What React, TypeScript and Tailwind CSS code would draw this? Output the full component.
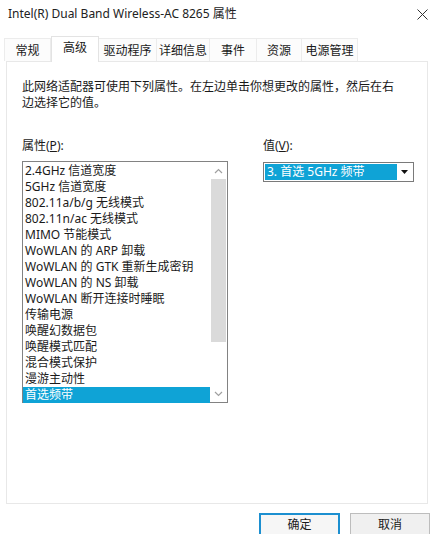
import React from 'react'

const tabs = [
  { label: '常规', w: 'w-[47px]' },
  { label: '高级', w: 'w-[48px]', active: true },
  { label: '驱动程序', w: 'w-[58px]' },
  { label: '详细信息', w: 'w-[53px]' },
  { label: '事件', w: 'w-[47px]' },
  { label: '资源', w: 'w-[45px]' },
  { label: '电源管理', w: 'w-[56px]' },
]

const props = [
  '2.4GHz 信道宽度',
  '5GHz 信道宽度',
  '802.11a/b/g 无线模式',
  '802.11n/ac 无线模式',
  'MIMO 节能模式',
  'WoWLAN 的 ARP 卸载',
  'WoWLAN 的 GTK 重新生成密钥',
  'WoWLAN 的 NS 卸载',
  'WoWLAN 断开连接时睡眠',
  '传输电源',
  '唤醒幻数据包',
  '唤醒模式匹配',
  '混合模式保护',
  '漫游主动性',
  '首选频带',
]

const font = { fontFamily: '"Noto Sans", "Noto Sans CJK SC", sans-serif' }

function Chevron({ up }: { up?: boolean }) {
  return (
    <svg width="9" height="6" viewBox="0 0 9 6" className="text-[#a0a0a0]">
      <path
        d={up ? 'M1 5 L4.5 1.5 L8 5' : 'M1 1 L4.5 4.5 L8 1'}
        fill="none"
        stroke="currentColor"
        strokeWidth="1.2"
      />
    </svg>
  )
}

export default function App() {
  return (
    <div
      className="w-[437px] h-[534px] bg-white overflow-hidden text-[12px] text-[#1a1a1a] leading-none"
      style={font}
    >
      {/* title bar */}
      <div className="h-[35px] flex items-start justify-between pl-[8px] pr-[9px] pt-[8px]">
        <span className="text-[12px] text-[#222]">Intel(R) Dual Band Wireless-AC 8265 属性</span>
        <svg width="11" height="11" viewBox="0 0 11 11" className="mt-[1px]">
          <path d="M0.5 0.5 L10.5 10.5 M10.5 0.5 L0.5 10.5" stroke="#333" strokeWidth="1" />
        </svg>
      </div>

      {/* tabs */}
      <div className="flex items-end h-[26px] pl-[4px]">
        {tabs.map(t => (
          <div
            key={t.label}
            className={
              t.active
                ? `${t.w} h-[26px] -mb-px z-10 bg-white border border-b-0 border-[#e3e3e3] flex items-start justify-center pt-[5px] relative`
                : `${t.w} h-[23px] bg-[#fcfcfc] border border-b-0 border-l-0 border-[#ececec] first:border-l flex items-start justify-center pt-[6px]`
            }
          >
            <span className="text-[12px] text-[#1a1a1a]">{t.label}</span>
          </div>
        ))}
      </div>

      {/* tab panel */}
      <div className="ml-[6px] w-[422px] h-[443px] border border-[#e8e8e8] bg-white pl-[15px] pt-[17px]">
        <p className="text-[12px] leading-[16px] text-[#1a1a1a] w-[379px]">
          此网络适配器可使用下列属性。在左边单击你想更改的属性，然后在右边选择它的值。
        </p>

        <div className="flex mt-[29px]">
          <div className="w-[240px]">
            <div className="h-[16px] text-[12px]">
              属性(<span className="underline">P</span>):
            </div>
            <div className="mt-[5px] w-[206px] h-[242px] border border-[#828282] flex">
              <div className="flex-1 pt-[1px]">
                {props.map((p, i) => (
                  <div
                    key={p}
                    className={
                      i === props.length - 1
                        ? 'h-[16px] pl-[2px] flex items-center bg-[#0fa3d6] text-white'
                        : 'h-[16px] pl-[2px] flex items-center'
                    }
                  >
                    {p}
                  </div>
                ))}
              </div>
              <div className="w-[17px] flex flex-col bg-white">
                <div className="h-[17px] flex items-center justify-center">
                  <Chevron up />
                </div>
                <div className="flex-1 px-[1px]">
                  <div className="h-[163px] bg-[#dadada]" />
                </div>
                <div className="h-[17px] flex items-center justify-center">
                  <Chevron />
                </div>
              </div>
            </div>
          </div>

          <div className="pl-[1px]">
            <div className="h-[16px] text-[12px]">
              值(<span className="underline">V</span>):
            </div>
            <div className="mt-[6px] w-[151px] h-[20px] border border-[#7a7a7a] flex p-[1px]">
              <div className="flex-1 bg-[#0fa3d6] text-white flex items-center pl-[2px]">
                3. 首选 5GHz 频带
              </div>
              <div className="w-[15px] flex items-center justify-center">
                <svg width="7" height="4" viewBox="0 0 7 4">
                  <path d="M0 0 H7 L3.5 4 Z" fill="#111" />
                </svg>
              </div>
            </div>
          </div>
        </div>
      </div>

      {/* dialog buttons */}
      <div className="flex justify-end gap-[10px] pr-[7px] mt-[9px]">
        <button className="w-[81px] h-[23px] border-2 border-[#1c8fd0] bg-[#f6f6f6] text-[12px] text-[#1a1a1a]">
          确定
        </button>
        <button className="w-[80px] h-[23px] border border-[#bdbdbd] bg-[#f0f0f0] text-[12px] text-[#1a1a1a]">
          取消
        </button>
      </div>
    </div>
  )
}
